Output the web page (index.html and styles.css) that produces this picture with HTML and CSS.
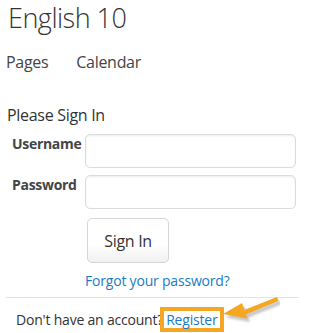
FILE: index.html
```html
<!DOCTYPE html>
<html lang="en">
<head>
<meta charset="utf-8">
<title>English 10</title>
<link rel="stylesheet" href="styles.css">
</head>
<body>
<div class="page">
  <h1 class="title">English 10</h1>
  <nav class="nav">
    <a class="nav-link" href="#">Pages</a>
    <a class="nav-link" href="#">Calendar</a>
  </nav>
  <form class="signin">
    <div class="legend">Please Sign In</div>
    <div class="row">
      <label class="label" for="u">Username</label>
      <input class="field" id="u" type="text">
    </div>
    <div class="row">
      <label class="label" for="p">Password</label>
      <input class="field" id="p" type="password">
    </div>
    <div class="actions">
      <button class="btn" type="button">Sign In</button>
      <a class="link forgot" href="#">Forgot your password?</a>
    </div>
    <div class="footer">
      <span class="footer-text">Don't have an account?</span><span class="highlight"><a class="link" href="#">Register</a></span>
    </div>
  </form>
</div>
<svg class="arrow" width="80" height="40" viewBox="0 0 80 40" aria-hidden="true">
  <defs>
    <filter id="sh" x="-20%" y="-50%" width="140%" height="200%">
      <feGaussianBlur stdDeviation="1.2"/>
    </filter>
  </defs>
  <g transform="translate(1.5,2.5)" fill="#9a9a9a" opacity="0.55" filter="url(#sh)">
    <path d="M78 5 L44 18 L45.5 22.5 L79.5 9 Z"/>
    <path d="M24 22 L43 11 L48.5 26.5 Z"/>
  </g>
  <g fill="#f5a623">
    <path d="M77 4 L44 17 L45.5 21.5 L78.5 8 Z"/>
    <path d="M23 21 L42 10 L47.5 25.5 Z"/>
  </g>
</svg>
</body>
</html>
```

FILE: styles.css
```css
* { box-sizing: border-box; }

html, body {
  margin: 0;
  padding: 0;
  background: #ffffff;
}

body {
  font-family: "Open Sans", "Noto Sans", "Liberation Sans", sans-serif;
  color: #333333;
  width: 299px;
  height: 333px;
  overflow: hidden;
  position: relative;
}

.page {
  padding: 0 0 0 6px;
}

.title {
  margin: 0 0 0 2px;
  font-size: 27px;
  font-weight: 300;
  line-height: 36px;
  letter-spacing: -0.5px;
  color: #333333;
}

.nav {
  display: flex;
  gap: 28px;
  margin-top: 15px;
  line-height: 22px;
}

.nav-link {
  font-size: 16px;
  color: #444444;
  text-decoration: none;
  letter-spacing: -0.3px;
}

.signin {
  margin-top: 31px;
}

.legend {
  font-size: 16px;
  line-height: 22px;
  letter-spacing: -0.3px;
  padding-left: 1px;
  color: #333333;
  margin-bottom: 8px;
}

.row {
  display: flex;
  align-items: flex-start;
  margin-bottom: 7px;
}

.label {
  width: 79px;
  padding-left: 6px;
  font-size: 14px;
  font-weight: 700;
  line-height: 20px;
  color: #444444;
  letter-spacing: -0.3px;
}

.field {
  width: 211px;
  height: 34px;
  border: 1px solid #dcdcdc;
  border-radius: 5px;
  background: #ffffff;
  box-shadow: inset 0 1px 2px rgba(0, 0, 0, 0.08);
  margin: 0;
}

.actions {
  display: flex;
  flex-direction: column;
  align-items: flex-start;
  padding-left: 79px;
}

.btn {
  margin: 2px 0 0 2px;
  width: 82px;
  height: 45px;
  border: 1px solid #d6d6d6;
  border-radius: 5px;
  background: linear-gradient(#ffffff 0%, #ffffff 60%, #f0f0f0 100%);
  font-family: inherit;
  font-size: 16px;
  color: #333333;
  letter-spacing: -0.3px;
  padding: 0;
}

.link {
  color: #1b7bc2;
  text-decoration: none;
  font-size: 14px;
  letter-spacing: -0.2px;
}

.forgot {
  margin-top: 8px;
  line-height: 19px;
}

.footer {
  margin-top: 7px;
  border-top: 1px solid #e3e3e3;
  padding: 9px 0 0 10px;
  display: flex;
  align-items: center;
  font-size: 14px;
}

.footer-text {
  color: #333333;
  letter-spacing: -0.2px;
}

.highlight {
  display: inline-block;
  border: 4px solid #f5a623;
  background: #ffffff;
  padding: 0 3px 0 2px;
  margin-left: -3px;
  line-height: 17px;
}

.arrow {
  position: absolute;
  left: 200px;
  top: 293px;
}
```
